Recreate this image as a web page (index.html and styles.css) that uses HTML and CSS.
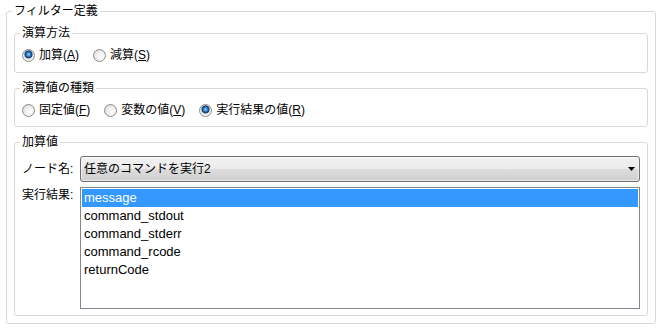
FILE: index.html
```html
<!DOCTYPE html>
<html lang="ja">

<head>
    <meta charset="UTF-8">
    <meta name="viewport" content="width=device-width, initial-scale=1.0">
    <title>フィルター定義</title>
    <link rel="stylesheet" href="styles.css">
</head>

<body>
    <fieldset class="group outer">
        <legend>フィルター定義</legend>

        <!-- 演算方法 -->
        <fieldset class="group">
            <legend>演算方法</legend>
            <div class="radio-row">
                <label class="radio"><input type="radio" name="op" checked><span>加算(<u>A</u>)</span></label>
                <label class="radio"><input type="radio" name="op"><span>減算(<u>S</u>)</span></label>
            </div>
        </fieldset>

        <!-- 演算値の種類 -->
        <fieldset class="group kind">
            <legend>演算値の種類</legend>
            <div class="radio-row">
                <label class="radio"><input type="radio" name="kind"><span>固定値(<u>F</u>)</span></label>
                <label class="radio"><input type="radio" name="kind"><span>変数の値(<u>V</u>)</span></label>
                <label class="radio"><input type="radio" name="kind" checked><span>実行結果の値(<u>R</u>)</span></label>
            </div>
        </fieldset>

        <!-- 加算値 -->
        <fieldset class="group value">
            <legend>加算値</legend>
            <div class="form-grid">
                <span class="field-label">ノード名:</span>
                <div class="combo">
                    <span>任意のコマンドを実行2</span>
                    <svg class="arrow" width="7" height="4" viewBox="0 0 7 4">
                        <path d="M0 0H7L3.5 4Z" fill="#000" />
                    </svg>
                </div>

                <span class="field-label top">実行結果:</span>
                <ul class="listbox">
                    <li class="selected">message</li>
                    <li>command_stdout</li>
                    <li>command_stderr</li>
                    <li>command_rcode</li>
                    <li>returnCode</li>
                </ul>
            </div>
        </fieldset>
    </fieldset>
</body>

</html>
```

FILE: styles.css
```css
body {
    margin: 0;
    background: #fff;
    color: #000;
    font-family: "Liberation Sans", "Noto Sans CJK JP", sans-serif;
    font-size: 12px;
    line-height: 16px;
}

.group {
    margin: 0;
    min-width: 0;
    padding: 6px 7px 9px;
    border: 1px solid #d9d9d9;
    border-radius: 3px;
}

.group + .group {
    margin-top: 7px;
}

.group legend {
    margin-left: -2px;
    padding: 0 2px;
    line-height: 16px;
}

.outer {
    margin: 3px 6px 0;
    padding-bottom: 7px;
}

.kind {
    padding-bottom: 8px;
}

.value {
    padding-bottom: 6px;
}

/* radio buttons */
.radio-row {
    display: flex;
    align-items: center;
    height: 16px;
}

.radio {
    display: inline-flex;
    align-items: center;
    gap: 4px;
    margin-right: 14px;
}

.radio u {
    text-underline-offset: 1px;
}

.radio input {
    appearance: none;
    box-sizing: border-box;
    width: 13px;
    height: 13px;
    margin: 0;
    border: 1px solid #8c8c8c;
    border-radius: 50%;
    background: radial-gradient(circle at 65% 65%, #fdfdfd 0, #f0f0f0 45%, #d4d4d4 100%);
}

.radio input:checked {
    background: radial-gradient(circle at 50% 40%, #9fdcff 0, #3f95dc 1.5px, #1a4f8f 3px, #143c6c 3.6px, #c9c9c9 4.3px, #eeeeee 5px, #fafafa 100%);
}

/* node + result fields */
.form-grid {
    display: grid;
    grid-template-columns: 58px 1fr;
    row-gap: 5px;
}

.field-label {
    align-self: center;
}

.field-label.top {
    align-self: start;
}

.combo {
    display: flex;
    align-items: center;
    justify-content: space-between;
    box-sizing: border-box;
    height: 26px;
    padding: 0 4px 0 3px;
    border: 1px solid #707070;
    border-radius: 3px;
    background: linear-gradient(#f2f2f2 0%, #ebebeb 50%, #dddddd 50%, #cfcfcf 100%);
    box-shadow: inset 0 0 0 1px rgba(255, 255, 255, 0.55);
}

.listbox {
    box-sizing: border-box;
    height: 122px;
    margin: 0;
    padding: 1px;
    list-style: none;
    border: 1px solid #828790;
    font-size: 13px;
    line-height: 18px;
}

.listbox li {
    padding: 0 2px;
}

.listbox .selected {
    background: #3399ff;
    color: #fff;
}
```
